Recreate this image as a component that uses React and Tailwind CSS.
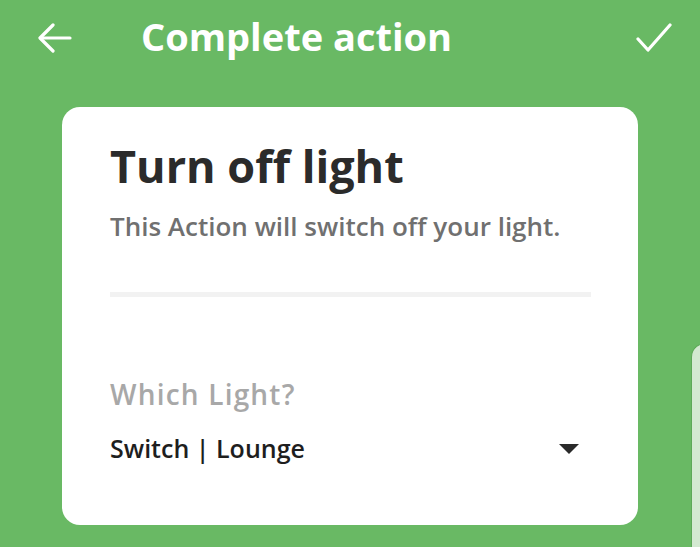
import React from "react";

function BackArrow() {
  return (
    <svg width="34" height="32" viewBox="0 0 34 32" fill="none" stroke="white" strokeWidth="3.2" strokeLinecap="round" strokeLinejoin="round">
      <path d="M32 16H3" />
      <path d="M15 3L2 16l13 13" />
    </svg>
  );
}

function Check() {
  return (
    <svg width="36" height="30" viewBox="0 0 36 30" fill="none" stroke="white" strokeWidth="3.2" strokeLinecap="round" strokeLinejoin="round">
      <path d="M2 16l10 11L34 2" />
    </svg>
  );
}

export default function App() {
  return (
    <div
      className="w-[700px] h-[547px] overflow-hidden bg-[#69b964]"
      style={{ fontFamily: "'Open Sans', Lato, sans-serif" }}
    >
      {/* top bar */}
      <div className="flex items-center h-[76px] pl-[38px] pr-[28px]">
        <BackArrow />
        <h1 className="ml-[69px] mb-[5px] text-[38px] font-bold text-white leading-none">
          Complete action
        </h1>
        <div className="ml-auto">
          <Check />
        </div>
      </div>

      <div className="flex mt-[31px]">
        {/* action card */}
        <div className="ml-[62px] w-[576px] h-[418px] shrink-0 bg-white rounded-[18px] pl-[48px] pr-[47px] pt-[36px]">
          <h2 className="text-[45px] font-bold text-[#2b2b2b] leading-none">
            Turn off light
          </h2>
          <p className="mt-[25px] text-[26px] font-semibold text-[#707070] leading-none">
            This Action will switch off your light.
          </p>
          <div className="mt-[53px] h-[5px] bg-[#f2f2f2]" />
          <div className="mt-[83px] text-[28px] font-semibold text-[#a8a8a8] leading-none tracking-[1.2px]">
            Which Light?
          </div>
          <div className="mt-[28px] flex items-center">
            <span className="text-[25px] font-semibold text-[#1e1e1e] leading-none">
              Switch | Lounge
            </span>
            <svg className="ml-auto mr-[12px]" width="20" height="10" viewBox="0 0 20 10">
              <path d="M0 0h20L10 10z" fill="#2a2a2a" />
            </svg>
          </div>
        </div>

        {/* next card peeking */}
        <div className="ml-[53px] mt-[236px] w-[40px] h-[300px] shrink-0 bg-[#d3e9d1] rounded-tl-[14px] border-l border-t border-[#5da958]" />
      </div>
    </div>
  );
}
